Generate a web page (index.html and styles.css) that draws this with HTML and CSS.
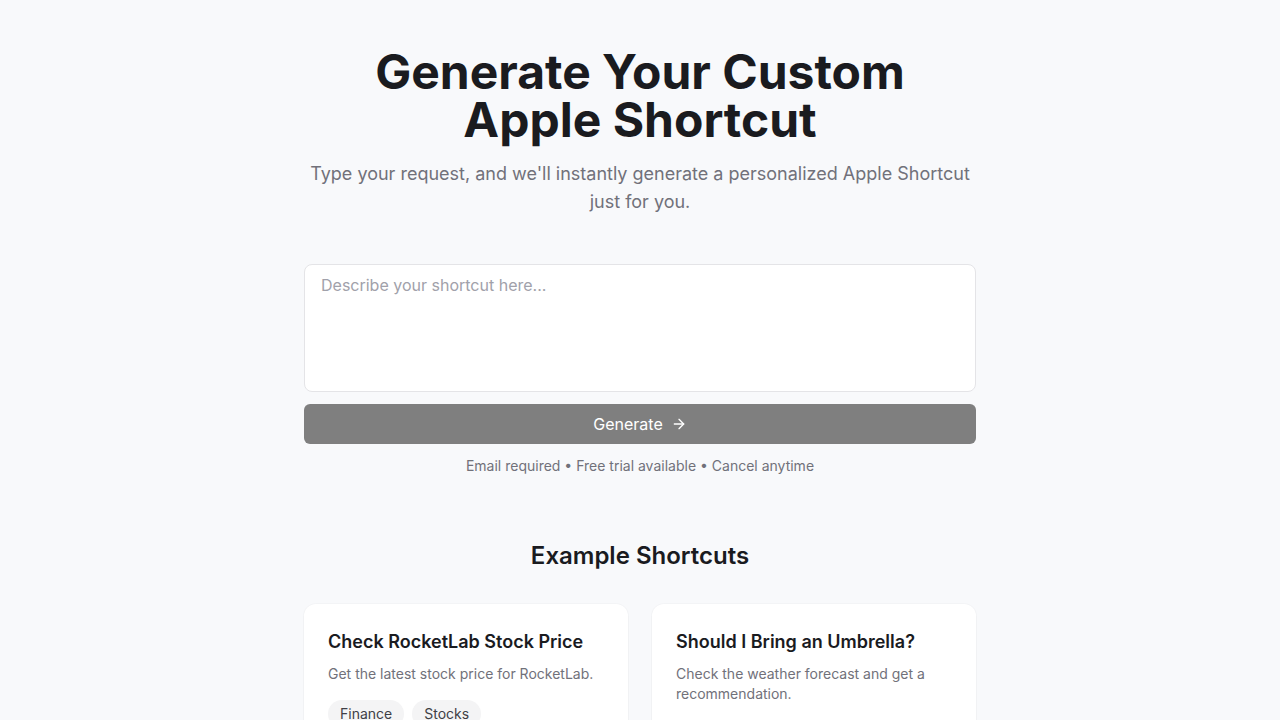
FILE: index.html
```html
<!DOCTYPE html>
<html lang="en">
<head>
<meta charset="utf-8">
<title>Generate Your Custom Apple Shortcut</title>
<link rel="stylesheet" href="styles.css">
</head>
<body>
<main class="page">
  <section class="hero">
    <h1 class="title">Generate Your Custom<br>Apple Shortcut</h1>
    <p class="subtitle">Type your request, and we'll instantly generate a personalized Apple Shortcut just for you.</p>
  </section>
  <form class="form">
    <textarea class="input" placeholder="Describe your shortcut here..."></textarea>
    <button type="button" class="btn" disabled>
      <span>Generate</span>
      <svg width="16" height="16" viewBox="0 0 24 24" fill="none" stroke="currentColor" stroke-width="2" stroke-linecap="round" stroke-linejoin="round"><path d="M5 12h14"/><path d="m12 5 7 7-7 7"/></svg>
    </button>
    <p class="note">Email required • Free trial available • Cancel anytime</p>
  </form>
  <section class="examples">
    <h2 class="examples-title">Example Shortcuts</h2>
    <div class="grid">
      <div class="card">
        <h3 class="card-title">Check RocketLab Stock Price</h3>
        <p class="card-desc">Get the latest stock price for RocketLab.</p>
        <div class="tags"><span class="tag">Finance</span><span class="tag">Stocks</span></div>
      </div>
      <div class="card">
        <h3 class="card-title">Should I Bring an Umbrella?</h3>
        <p class="card-desc">Check the weather forecast and get a recommendation.</p>
        <div class="tags"><span class="tag">Weather</span><span class="tag">Utility</span></div>
      </div>
    </div>
  </section>
</main>
</body>
</html>
```
FILE: styles.css
```css
* { box-sizing: border-box; }
html, body { margin: 0; padding: 0; }
body {
  background: #f8f9fb;
  font-family: Inter, "Noto Sans", sans-serif;
  color: #1a1b1f;
}
.page {
  max-width: 672px;
  margin: 0 auto;
  padding-top: 48px;
}
.hero { text-align: center; }
.title {
  margin: 0;
  font-size: 48px;
  line-height: 48px;
  font-weight: 700;
  color: #1a1b1f;
}
.subtitle {
  margin: 16px auto 0;
  font-size: 18px;
  line-height: 28px;
  color: #71717a;
}
.form {
  margin-top: 48px;
  display: flex;
  flex-direction: column;
}
.input {
  display: block;
  width: 100%;
  height: 128px;
  resize: none;
  border: 1px solid #e4e4e7;
  border-radius: 8px;
  background: #fff;
  padding: 8px 16px;
  font-family: inherit;
  font-size: 16px;
  line-height: 24px;
  color: #1a1b1f;
  outline: none;
}
.input::placeholder { color: #a1a1aa; }
.btn {
  margin-top: 12px;
  height: 40px;
  border: none;
  border-radius: 6px;
  background: #7f7f7f;
  color: #fff;
  font-family: inherit;
  font-size: 16px;
  font-weight: 400;
  display: flex;
  align-items: center;
  justify-content: center;
  gap: 8px;
}
.note {
  margin: 12px 0 0;
  text-align: center;
  font-size: 14px;
  line-height: 20px;
  color: #71717a;
}
.examples { margin-top: 64px; }
.examples-title {
  margin: 0;
  text-align: center;
  font-size: 24px;
  line-height: 32px;
  font-weight: 600;
  color: #1a1b1f;
}
.grid {
  margin-top: 32px;
  display: grid;
  grid-template-columns: 1fr 1fr;
  gap: 24px;
}
.card {
  background: #fff;
  border-radius: 12px;
  padding: 24px;
  box-shadow: 0 0 0 1px rgba(0,0,0,0.02), 0 1px 2px rgba(0,0,0,0.03);
}
.card-title {
  margin: 0;
  font-size: 18px;
  line-height: 28px;
  font-weight: 600;
  color: #1a1b1f;
}
.card-desc {
  margin: 8px 0 0;
  font-size: 14px;
  line-height: 20px;
  color: #71717a;
}
.tags {
  margin-top: 16px;
  display: flex;
  gap: 8px;
}
.tag {
  background: #f4f4f5;
  border-radius: 9999px;
  padding: 4px 12px;
  font-size: 14px;
  line-height: 20px;
  color: #3f3f46;
}
```
